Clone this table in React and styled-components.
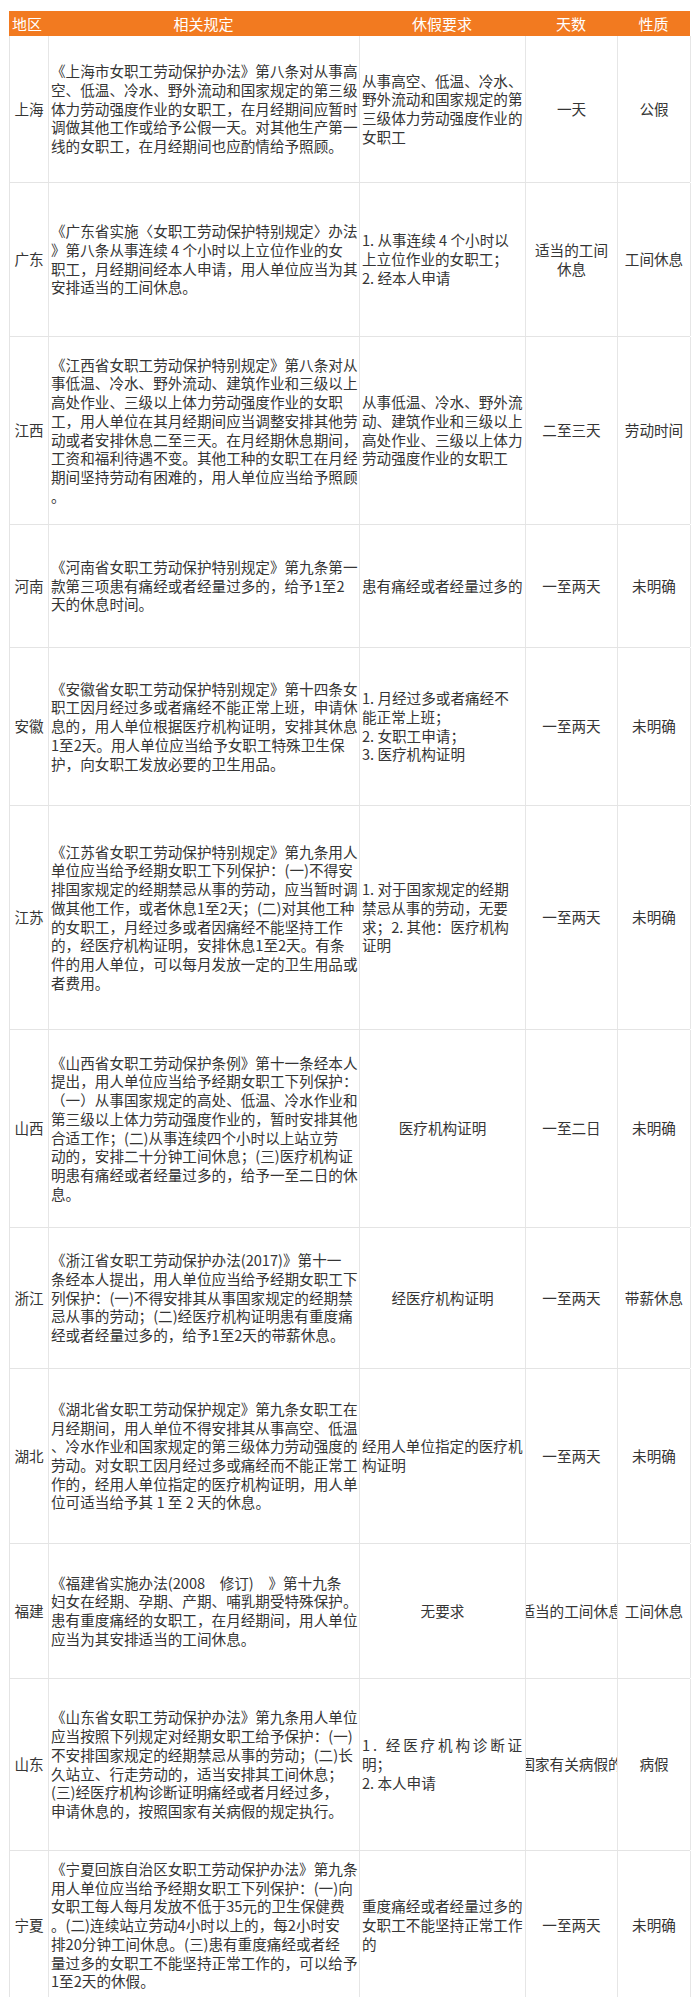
import React from 'react';
import styled, { createGlobalStyle } from 'styled-components';

const GlobalStyle = createGlobalStyle`
  html, body {
    margin: 0;
    padding: 0;
    background: #ffffff;
  }
  body {
    font-family: "Noto Sans CJK SC", "Liberation Serif", serif;
    color: #333333;
  }
`;

const COLS = '39px 311px 166px 92px 73px';

const Page = styled.div`
  width: 700px;
  padding: 11px 10px 0 9px;
  box-sizing: border-box;
`;

const Table = styled.div`
  width: 681px;
  border-left: 1px solid #e4e4e4;
  box-sizing: border-box;
`;

const HeaderRow = styled.div`
  display: grid;
  grid-template-columns: ${COLS};
  height: 25px;
  margin-left: -1px;
  background: #f27a20;
  color: #ffffff;
  font-size: 15px;
  line-height: 25px;
`;

const HeadCell = styled.div`
  text-align: ${p => (p.$left ? 'left' : 'center')};
  padding-left: ${p => (p.$left ? '3px' : '0')};
  white-space: nowrap;
`;

const Row = styled.div`
  display: grid;
  grid-template-columns: ${COLS};
  height: ${p => p.$h}px;
  margin-left: -1px;
  border-left: 1px solid #e4e4e4;
  border-bottom: 1px solid #e4e4e4;
  box-sizing: border-box;
  font-size: 14.6px;
  line-height: 18.7px;
  color: #353535;
`;

const Cell = styled.div`
  display: flex;
  align-items: center;
  border-right: 1px solid #e6e6e6;
  overflow: hidden;
  min-width: 0;
`;

const RegionCell = styled(Cell)`
  justify-content: center;
  white-space: nowrap;
`;

const TextCell = styled(Cell)`
  justify-content: ${p => (p.$center ? 'center' : 'flex-start')};
  padding-left: ${p => (p.$center ? '0' : '2px')};
`;

const Lines = styled.div`
  display: flex;
  flex-direction: column;
  align-items: ${p => (p.$center ? 'center' : 'flex-start')};
  white-space: nowrap;
`;

const Line = styled.span`
  display: block;
  letter-spacing: ${p => p.$spread || 0}px;
`;

const rows = [
  {
    region: '上海', h: 147,
    rule: [
      '《上海市女职工劳动保护办法》第八条对从事高',
      '空、低温、冷水、野外流动和国家规定的第三级',
      '体力劳动强度作业的女职工，在月经期间应暂时',
      '调做其他工作或给予公假一天。对其他生产第一',
      '线的女职工，在月经期间也应酌情给予照顾。',
    ],
    req: ['从事高空、低温、冷水、', '野外流动和国家规定的第', '三级体力劳动强度作业的', '女职工'],
    days: ['一天'], type: '公假',
  },
  {
    region: '广东', h: 154,
    rule: [
      '《广东省实施〈女职工劳动保护特别规定〉办法',
      '》第八条从事连续 4 个小时以上立位作业的女',
      '职工，月经期间经本人申请，用人单位应当为其',
      '安排适当的工间休息。',
    ],
    req: ['1. 从事连续 4 个小时以', '上立位作业的女职工；', '2. 经本人申请'],
    days: ['适当的工间', '休息'], type: '工间休息',
  },
  {
    region: '江西', h: 188,
    rule: [
      '《江西省女职工劳动保护特别规定》第八条对从',
      '事低温、冷水、野外流动、建筑作业和三级以上',
      '高处作业、三级以上体力劳动强度作业的女职',
      '工，用人单位在其月经期间应当调整安排其他劳',
      '动或者安排休息二至三天。在月经期休息期间，',
      '工资和福利待遇不变。其他工种的女职工在月经',
      '期间坚持劳动有困难的，用人单位应当给予照顾',
      '。',
    ],
    req: ['从事低温、冷水、野外流', '动、建筑作业和三级以上', '高处作业、三级以上体力', '劳动强度作业的女职工'],
    days: ['二至三天'], type: '劳动时间',
  },
  {
    region: '河南', h: 123,
    rule: [
      '《河南省女职工劳动保护特别规定》第九条第一',
      '款第三项患有痛经或者经量过多的，给予1至2',
      '天的休息时间。',
    ],
    req: ['患有痛经或者经量过多的'],
    days: ['一至两天'], type: '未明确',
  },
  {
    region: '安徽', h: 158,
    rule: [
      '《安徽省女职工劳动保护特别规定》第十四条女',
      '职工因月经过多或者痛经不能正常上班，申请休',
      '息的，用人单位根据医疗机构证明，安排其休息',
      '1至2天。用人单位应当给予女职工特殊卫生保',
      '护，向女职工发放必要的卫生用品。',
    ],
    req: ['1. 月经过多或者痛经不', '能正常上班；', '2. 女职工申请；', '3. 医疗机构证明'],
    days: ['一至两天'], type: '未明确',
  },
  {
    region: '江苏', h: 224,
    rule: [
      '《江苏省女职工劳动保护特别规定》第九条用人',
      '单位应当给予经期女职工下列保护：(一)不得安',
      '排国家规定的经期禁忌从事的劳动，应当暂时调',
      '做其他工作，或者休息1至2天；(二)对其他工种',
      '的女职工，月经过多或者因痛经不能坚持工作',
      '的，经医疗机构证明，安排休息1至2天。有条',
      '件的用人单位，可以每月发放一定的卫生用品或',
      '者费用。',
    ],
    req: ['1. 对于国家规定的经期', '禁忌从事的劳动，无要', '求；2. 其他：医疗机构', '证明'],
    days: ['一至两天'], type: '未明确',
  },
  {
    region: '山西', h: 198,
    rule: [
      '《山西省女职工劳动保护条例》第十一条经本人',
      '提出，用人单位应当给予经期女职工下列保护：',
      '（一）从事国家规定的高处、低温、冷水作业和',
      '第三级以上体力劳动强度作业的，暂时安排其他',
      '合适工作；(二)从事连续四个小时以上站立劳',
      '动的，安排二十分钟工间休息；(三)医疗机构证',
      '明患有痛经或者经量过多的，给予一至二日的休',
      '息。',
    ],
    req: ['医疗机构证明'], reqCenter: true,
    days: ['一至二日'], type: '未明确',
  },
  {
    region: '浙江', h: 141,
    rule: [
      '《浙江省女职工劳动保护办法(2017)》第十一',
      '条经本人提出，用人单位应当给予经期女职工下',
      '列保护：(一)不得安排其从事国家规定的经期禁',
      '忌从事的劳动；(二)经医疗机构证明患有重度痛',
      '经或者经量过多的，给予1至2天的带薪休息。',
    ],
    req: ['经医疗机构证明'], reqCenter: true,
    days: ['一至两天'], type: '带薪休息',
  },
  {
    region: '湖北', h: 175,
    rule: [
      '《湖北省女职工劳动保护规定》第九条女职工在',
      '月经期间，用人单位不得安排其从事高空、低温',
      '、冷水作业和国家规定的第三级体力劳动强度的',
      '劳动。对女职工因月经过多或痛经而不能正常工',
      '作的，经用人单位指定的医疗机构证明，用人单',
      '位可适当给予其 1 至 2 天的休息。',
    ],
    req: ['经用人单位指定的医疗机', '构证明'],
    days: ['一至两天'], type: '未明确',
  },
  {
    region: '福建', h: 135,
    rule: [
      '《福建省实施办法(2008　修订)　》第十九条',
      '妇女在经期、孕期、产期、哺乳期受特殊保护。',
      '患有重度痛经的女职工，在月经期间，用人单位',
      '应当为其安排适当的工间休息。',
    ],
    req: ['无要求'], reqCenter: true,
    days: ['适当的工间休息'], type: '工间休息',
  },
  {
    region: '山东', h: 172,
    rule: [
      '《山东省女职工劳动保护办法》第九条用人单位',
      '应当按照下列规定对经期女职工给予保护：(一)',
      '不安排国家规定的经期禁忌从事的劳动；(二)长',
      '久站立、行走劳动的，适当安排其工间休息；',
      '(三)经医疗机构诊断证明痛经或者月经过多，',
      '申请休息的，按照国家有关病假的规定执行。',
    ],
    req: ['1. 经医疗机构诊断证', '明；', '2. 本人申请'], spread: [2.8, 0, 0],
    days: ['国家有关病假的'], type: '病假',
  },
  {
    region: '宁夏', h: 150,
    rule: [
      '《宁夏回族自治区女职工劳动保护办法》第九条',
      '用人单位应当给予经期女职工下列保护：(一)向',
      '女职工每人每月发放不低于35元的卫生保健费',
      '。(二)连续站立劳动4小时以上的，每2小时安',
      '排20分钟工间休息。(三)患有重度痛经或者经',
      '量过多的女职工不能坚持正常工作的，可以给予',
      '1至2天的休假。',
    ],
    req: ['重度痛经或者经量过多的', '女职工不能坚持正常工作', '的'],
    days: ['一至两天'], type: '未明确',
  },
];

export default function App() {
  return (
    <Page>
      <GlobalStyle />
      <Table>
        <HeaderRow>
          <HeadCell $left>地区</HeadCell>
          <HeadCell>相关规定</HeadCell>
          <HeadCell>休假要求</HeadCell>
          <HeadCell>天数</HeadCell>
          <HeadCell>性质</HeadCell>
        </HeaderRow>
        {rows.map(r => (
          <Row key={r.region} $h={r.h}>
            <RegionCell>{r.region}</RegionCell>
            <TextCell>
              <Lines>
                {r.rule.map((l, i) => <Line key={i}>{l}</Line>)}
              </Lines>
            </TextCell>
            <TextCell $center={r.reqCenter}>
              <Lines $center={r.reqCenter}>
                {r.req.map((l, i) => (
                  <Line key={i} $spread={r.spread ? r.spread[i] : 0}>{l}</Line>
                ))}
              </Lines>
            </TextCell>
            <TextCell $center>
              <Lines $center>
                {r.days.map((l, i) => <Line key={i}>{l}</Line>)}
              </Lines>
            </TextCell>
            <RegionCell>{r.type}</RegionCell>
          </Row>
        ))}
      </Table>
    </Page>
  );
}
